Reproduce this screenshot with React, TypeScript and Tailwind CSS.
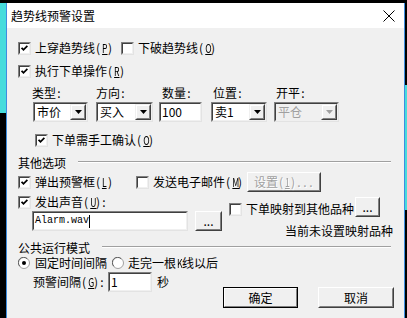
import React from "react"

const sunkenOuter = "border border-t-[#808080] border-l-[#808080] border-b-[#e3e3e3] border-r-[#e3e3e3]"
const sunkenInner = "border border-t-[#404040] border-l-[#404040] border-b-[#f0f0f0] border-r-[#f0f0f0]"

// half-width chars are 6px wide in the dialog font; wide letters get squeezed
function H({ c, u }: { c: string; u?: boolean }) {
    const letter = /[A-Za-z0-9]/.test(c)
    return (
        <span className="inline-block w-[6px] text-center">
            {letter ? <span className={`inline-block scale-x-[0.72] ${u ? "underline" : ""}`}>{c}</span> : c}
        </span>
    )
}

function Acc({ k, colon }: { k: string; colon?: boolean }) {
    return (
        <>
            <H c="(" />
            <H c={k} u />
            <H c=")" />
            {colon && <H c=":" />}
        </>
    )
}

function Box({ checked }: { checked?: boolean }) {
    return (
        <span className={`flex h-[13px] w-[13px] shrink-0 bg-white ${sunkenOuter}`}>
            <span className={`flex flex-1 items-center justify-center ${sunkenInner}`}>
                {checked && (
                    <svg width="7" height="7" viewBox="0 0 7 7">
                        <polyline points="0.6,2.8 2.5,4.8 6.4,0.9" fill="none" stroke="black" strokeWidth="1.8" />
                    </svg>
                )}
            </span>
        </span>
    )
}

function Radio({ checked }: { checked?: boolean }) {
    return (
        <svg width="12" height="12" viewBox="0 0 12 12" className="shrink-0">
            <circle cx="6" cy="6" r="5.5" fill="white" stroke="#a0a0a0" />
            <path d="M1.8 9.2 A5 5 0 0 1 9.2 1.8" fill="none" stroke="#606060" />
            {checked && <circle cx="6" cy="6" r="2" fill="black" />}
        </svg>
    )
}

function Check({ checked, children }: { checked?: boolean; children: React.ReactNode }) {
    return (
        <div className="flex items-center gap-[4px]">
            <Box checked={checked} />
            <span className="whitespace-nowrap">{children}</span>
        </div>
    )
}

function Tri({ disabled }: { disabled?: boolean }) {
    return (
        <svg width="7" height="4" viewBox="0 0 7 4">
            <polygon points="0,0 7,0 3.5,4" fill={disabled ? "#a0a0a0" : "black"} />
        </svg>
    )
}

function Select({ value, width, disabled }: { value: React.ReactNode; width: string; disabled?: boolean }) {
    return (
        <div className={`flex h-[20px] ${width} ${disabled ? "bg-[#f0f0f0]" : "bg-white"} ${sunkenOuter}`}>
            <div className={`flex flex-1 items-center ${sunkenInner}`}>
                <span className={`flex-1 pl-[2px] ${disabled ? "text-[#a0a0a0]" : ""}`}>{value}</span>
                <span className="flex h-[16px] w-[16px] items-center justify-center border border-t-[#f0f0f0] border-l-[#f0f0f0] border-b-[#404040] border-r-[#404040] bg-[#f0f0f0]">
                    <span className="flex h-full w-full items-center justify-center border border-t-white border-l-white border-b-[#808080] border-r-[#808080]">
                        <Tri disabled={disabled} />
                    </span>
                </span>
            </div>
        </div>
    )
}

function Input({ value, width, mono, caret }: { value: string; width: string; mono?: boolean; caret?: boolean }) {
    return (
        <div className={`flex h-[20px] ${width} bg-white ${sunkenOuter}`}>
            <div className={`flex flex-1 items-center pl-[1px] ${sunkenInner}`}>
                <span className={mono ? "font-['Liberation_Mono',monospace] text-[10px]" : ""}>{value}</span>
                {caret && <span className="h-[13px] w-px bg-black" />}
            </div>
        </div>
    )
}

function Btn({ children, width, height, isDefault, disabled }: {
    children: React.ReactNode; width: string; height: string; isDefault?: boolean; disabled?: boolean
}) {
    const outer = isDefault ? "border border-black" : "border border-t-white border-l-white border-b-[#404040] border-r-[#404040]"
    const inner = isDefault
        ? "border border-t-white border-l-white border-b-[#808080] border-r-[#808080]"
        : "border border-t-[#f0f0f0] border-l-[#f0f0f0] border-b-[#808080] border-r-[#808080]"
    return (
        <div className={`flex ${width} ${height} shrink-0 bg-[#f0f0f0] ${outer}`}>
            <div className={`flex flex-1 items-center justify-center whitespace-nowrap ${inner} ${disabled ? "text-[#a0a0a0] [text-shadow:1px_1px_0_#fff]" : ""}`}>
                {children}
            </div>
        </div>
    )
}

function Group({ title }: { title: string }) {
    return (
        <div className="flex h-[14px] items-start">
            <span className="whitespace-nowrap">{title}</span>
            <div className="ml-[12px] mt-[5px] h-[2px] flex-1 border-t border-b border-t-[#a0a0a0] border-b-white" />
        </div>
    )
}

export default function App() {
    return (
        <div className="flex h-[318px] w-[407px] overflow-hidden bg-black font-['Noto_Sans_CJK_SC',sans-serif] text-[12px] leading-[14px] text-black">
            {/* desktop behind, left */}
            <div className="mt-[3px] w-[6px] shrink-0">
                <div className="h-[110px] bg-[#46dcdc]" />
            </div>

            {/* dialog */}
            <div className="mt-[3px] flex w-[399px] shrink-0 flex-col border-x border-[#3d8de0] bg-[#f0f0f0]">
                {/* title bar */}
                <div className="flex h-[25px] items-center justify-between bg-white pl-[4px] pr-[9px]">
                    <span>趋势线预警设置</span>
                    <svg width="12" height="12" viewBox="0 0 12 12">
                        <path d="M0.5 0.5 L11.5 11.5 M11.5 0.5 L0.5 11.5" stroke="black" strokeWidth="1" />
                    </svg>
                </div>

                <div className="flex flex-col pl-[11px] pr-[13px] pt-[12px]">
                    <div className="flex h-[16px] items-center gap-[8px]">
                        <Check checked>上穿趋势线<Acc k="P" /></Check>
                        <Check>下破趋势线<Acc k="O" /></Check>
                    </div>

                    <div className="mt-[7px] flex h-[16px] items-center">
                        <Check checked>执行下单操作<Acc k="R" /></Check>
                    </div>

                    {/* order params */}
                    <div className="mt-[7px] flex pl-[15px]">
                        <div className="flex flex-col gap-[2px]">
                            <span className="-ml-px h-[14px]">类型<H c=":" /></span>
                            <Select value="市价" width="w-[55px]" />
                        </div>
                        <div className="ml-[8px] flex flex-col gap-[2px]">
                            <span className="h-[14px]">方向<H c=":" /></span>
                            <Select value="买入" width="w-[57px]" />
                        </div>
                        <div className="ml-[6px] flex flex-col gap-[2px]">
                            <span className="h-[14px] pl-[3px]">数量<H c=":" /></span>
                            <Input value="100" width="w-[43px]" />
                        </div>
                        <div className="ml-[9px] flex flex-col gap-[2px]">
                            <span className="h-[14px] pl-[2px]">位置<H c=":" /></span>
                            <Select value="卖1" width="w-[56px]" />
                        </div>
                        <div className="ml-[7px] flex flex-col gap-[2px]">
                            <span className="h-[14px] pl-[2px]">开平<H c=":" /></span>
                            <Select value="平仓" width="w-[65px]" disabled />
                        </div>
                    </div>

                    <div className="ml-[17px] mt-[10px] flex h-[16px] items-center">
                        <Check checked>下单需手工确认<Acc k="O" /></Check>
                    </div>

                    <div className="mt-[8px]">
                        <Group title="其他选项" />
                    </div>

                    <div className="mt-[2px] flex h-[20px] items-center">
                        <Check checked>弹出预警框<Acc k="L" /></Check>
                        <div className="ml-[23px]">
                            <Check>发送电子邮件<Acc k="M" /></Check>
                        </div>
                        <div className="ml-[4px]">
                            <Btn width="w-[74px]" height="h-[20px]" disabled>设置<Acc k="1" /><H c="." /><H c="." /><H c="." /></Btn>
                        </div>
                    </div>

                    <div className="flex">
                        <div className="flex w-[204px] flex-col">
                            <div className="mt-[2px] flex h-[16px] items-center">
                                <Check checked>发出声音<Acc k="U" colon /></Check>
                            </div>
                            <div className="ml-[14px] mt-[1px] flex items-center gap-[7px]">
                                <Input value="Alarm.wav" width="w-[156px]" mono caret />
                                <Btn width="w-[27px]" height="h-[20px]">...</Btn>
                            </div>
                        </div>
                        <div className="ml-[7px] flex flex-1 flex-col">
                            <div className="mt-[5px] flex h-[20px] items-end">
                                <div className="mb-[1px] flex items-center gap-[4px]">
                                    <Box />
                                    <span className="whitespace-nowrap">下单映射到其他品种</span>
                                </div>
                                <div className="ml-px">
                                    <Btn width="w-[25px]" height="h-[20px]">...</Btn>
                                </div>
                            </div>
                            <span className="-mr-[2px] mt-[7px] self-end">当前未设置映射品种</span>
                        </div>
                    </div>

                    <div className="mt-[3px]">
                        <Group title="公共运行模式" />
                    </div>

                    <div className="flex h-[16px] items-center">
                        <div className="flex items-center gap-[5px]">
                            <Radio checked />
                            <span>固定时间间隔</span>
                        </div>
                        <div className="ml-[5px] flex items-center gap-[4px]">
                            <Radio />
                            <span>走完一根<H c="K" />线以后</span>
                        </div>
                    </div>

                    <div className="mt-[1px] flex items-start">
                        <div className="ml-[15px] flex h-[20px] items-center">
                            <span>预警间隔<Acc k="G" colon /></span>
                            <div className="ml-[3px]">
                                <Input value="1" width="w-[44px]" />
                            </div>
                            <span className="ml-[5px]">秒</span>
                        </div>
                        <div className="-mr-[3px] ml-auto mt-[15px] flex gap-[20px]">
                            <Btn width="w-[75px]" height="h-[21px]" isDefault>确定</Btn>
                            <Btn width="w-[76px]" height="h-[21px]">取消</Btn>
                        </div>
                    </div>
                </div>
            </div>

            {/* desktop behind, right */}
            <div className="flex w-[2px] shrink-0 flex-col">
                <div className="h-[85px]" />
                <div className="h-[125px] bg-[#46dcdc]" />
            </div>
        </div>
    )
}
